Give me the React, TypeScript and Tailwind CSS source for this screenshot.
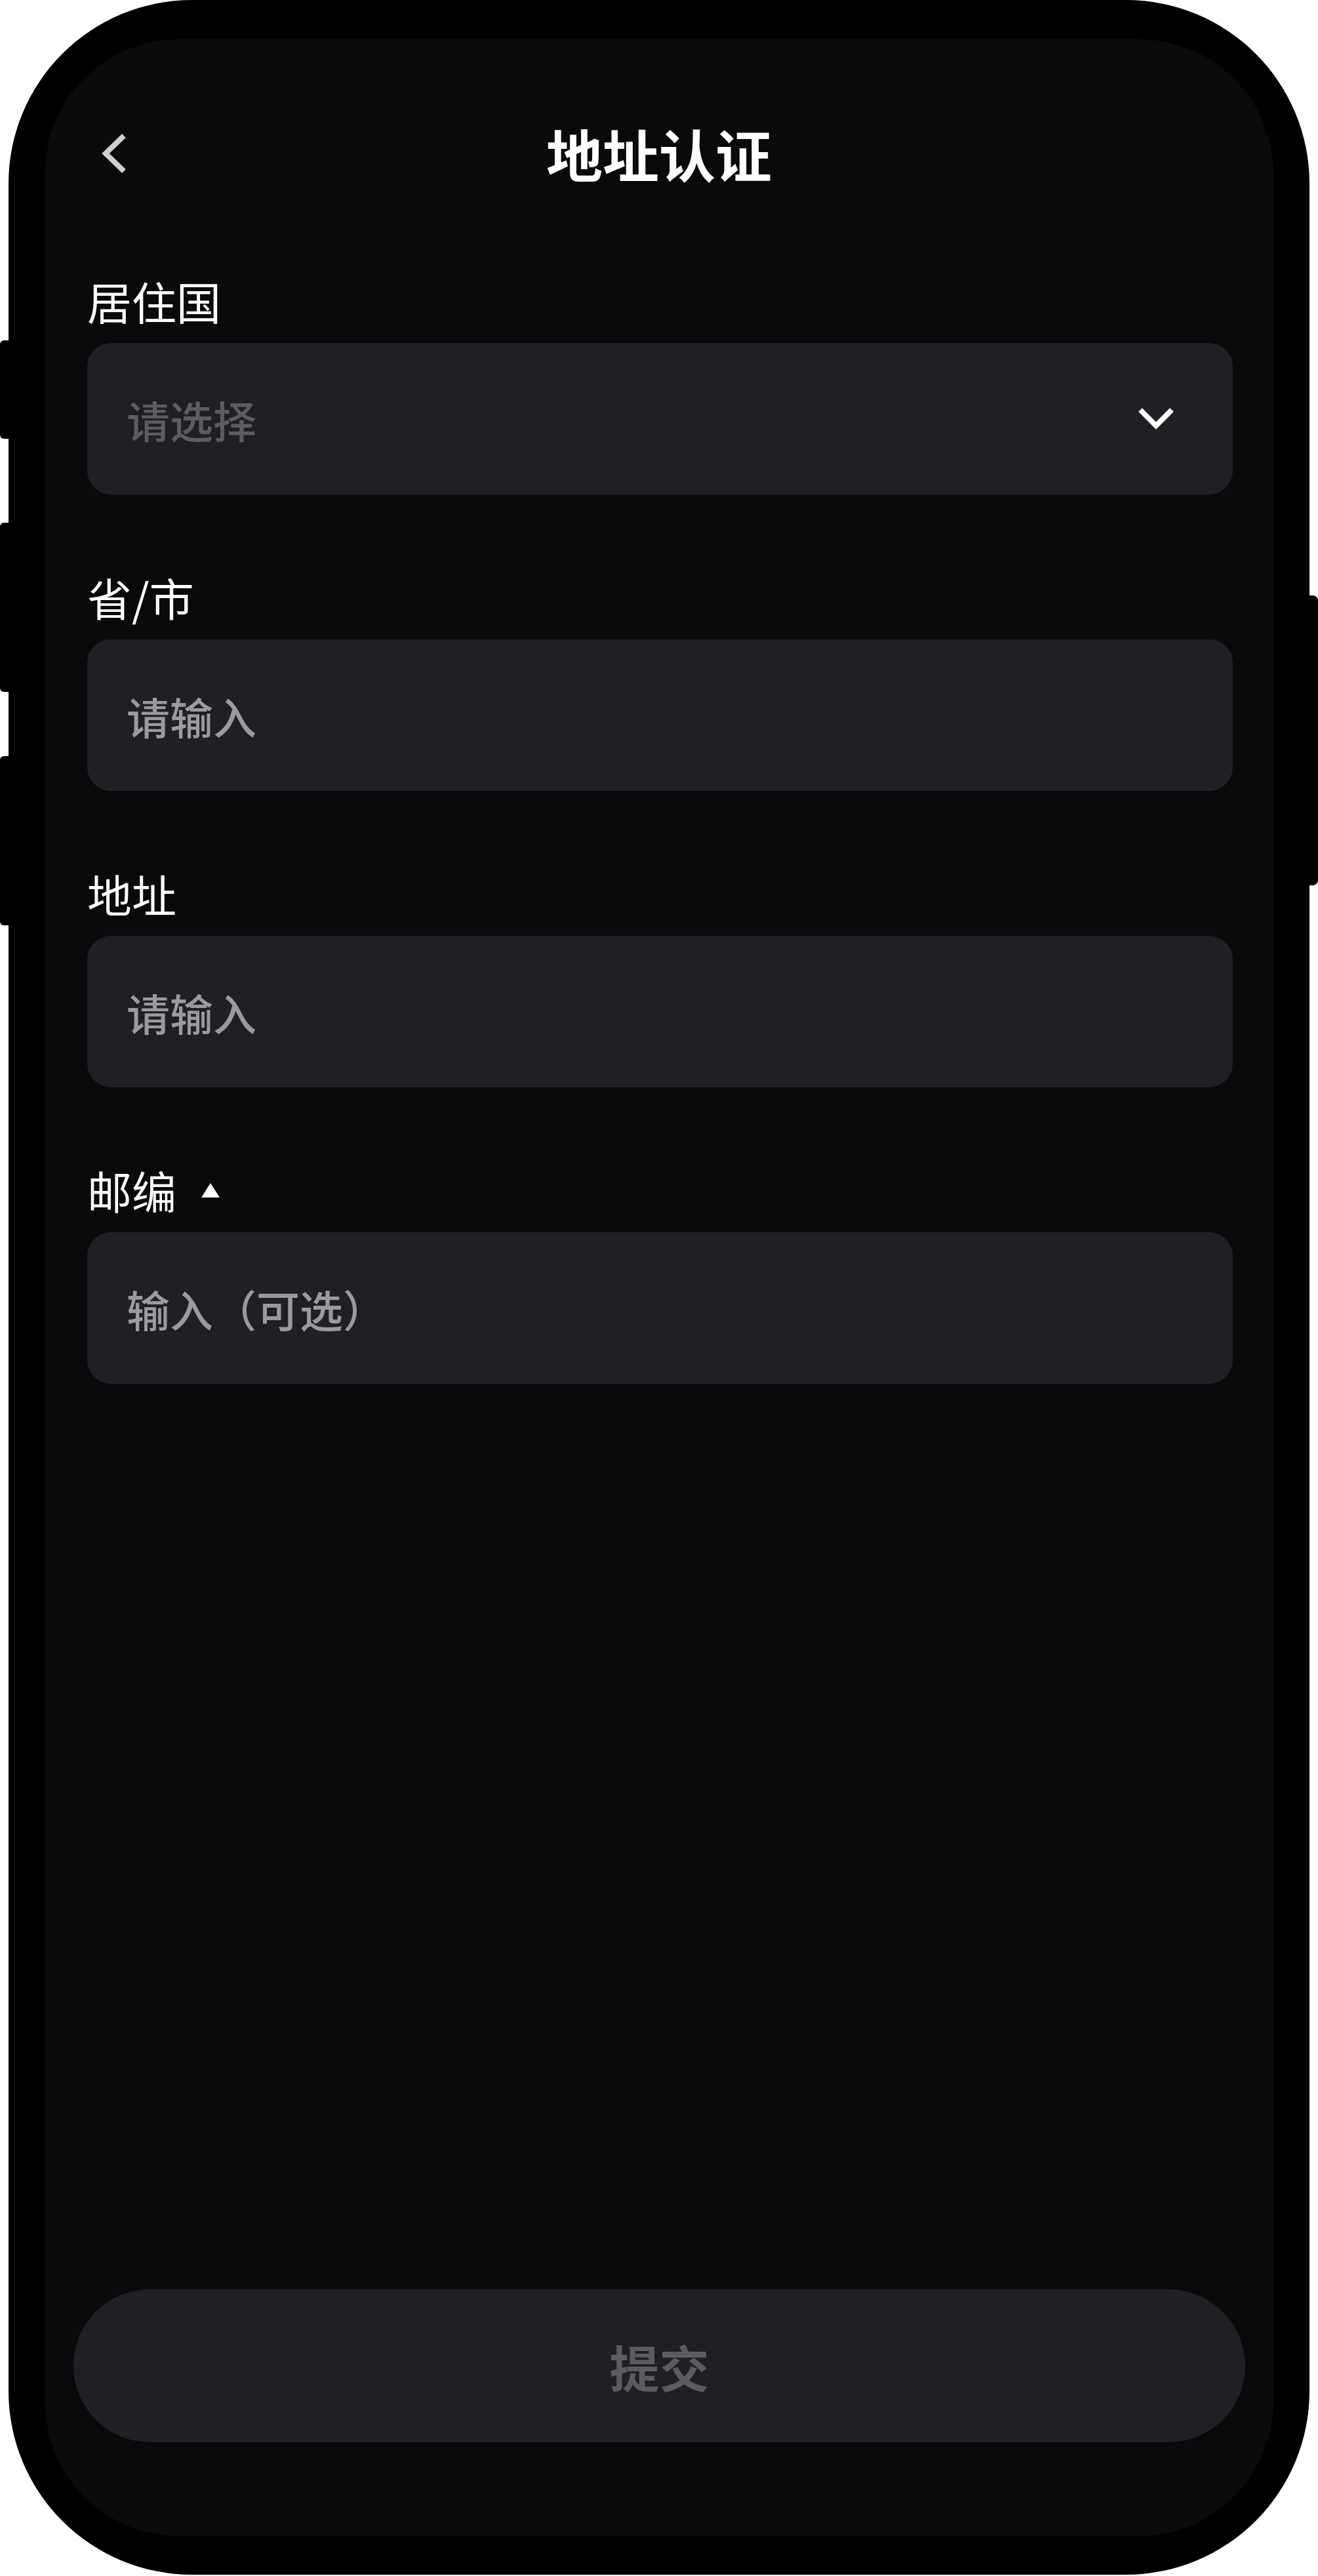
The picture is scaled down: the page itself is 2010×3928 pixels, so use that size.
import { useState } from 'react'

const fields = [
  { label: '省/市', placeholder: '请输入' },
  { label: '地址', placeholder: '请输入' },
]

function BackIcon() {
  return (
    <svg width="40" height="62" viewBox="0 0 40 62" fill="none">
      <path d="M34 4 L6 31 L34 58" stroke="#cfcfcf" strokeWidth="8" strokeLinejoin="miter" />
    </svg>
  )
}

function ChevronDownIcon() {
  return (
    <svg width="54" height="40" viewBox="0 0 54 40" fill="none">
      <path d="M3 6 L27 30 L51 6" stroke="#ffffff" strokeWidth="8" />
    </svg>
  )
}

function Label({ children }: { children: React.ReactNode }) {
  return <div className="flex items-center text-[68px] leading-none text-white h-[68px]">{children}</div>
}

export default function App() {
  const [values, setValues] = useState<Record<string, string>>({})

  return (
    <div className="w-[2010px] h-[3928px] bg-white font-['Noto_Sans_CJK_SC','Noto_Sans',sans-serif]">
      <div className="relative ml-[13px] w-[1984px] h-[3926px] rounded-[280px] bg-black pt-[60px] pb-[59px] pl-[55px] pr-[55px]">
        {/* hardware buttons */}
        <div className="absolute left-[-13px] top-[519px] w-[16px] h-[150px] rounded-l-[6px] bg-black" />
        <div className="absolute left-[-13px] top-[797px] w-[16px] h-[258px] rounded-l-[6px] bg-black" />
        <div className="absolute left-[-13px] top-[1153px] w-[16px] h-[258px] rounded-l-[6px] bg-black" />
        <div className="absolute right-[-13px] top-[908px] w-[16px] h-[442px] rounded-r-[8px] bg-black" />

        <div className="flex h-full flex-col rounded-[205px] bg-[#090a0a]">
          {/* header */}
          <div className="mt-[114px] grid h-[120px] grid-cols-[1fr_auto_1fr] items-center">
            <div className="pl-[87px]">
              <BackIcon />
            </div>
            <h1 className="text-[86px] font-bold leading-none text-white">地址认证</h1>
            <div />
          </div>

          {/* form */}
          <div className="mt-[131px] flex flex-col gap-[123px] pl-[65px] pr-[62px]">
            <div className="flex flex-col gap-[30px]">
              <Label>居住国</Label>
              <button className="flex h-[231px] items-center justify-between rounded-[36px] bg-[#1f2024] pl-[60px] pr-[90px]">
                <span className="text-[66px] font-medium leading-none text-[#5c5d61]">请选择</span>
                <ChevronDownIcon />
              </button>
            </div>

            {fields.map((f) => (
              <div key={f.label} className="flex flex-col gap-[30px]">
                <Label>{f.label}</Label>
                <input
                  value={values[f.label] ?? ''}
                  onChange={(e) => setValues({ ...values, [f.label]: e.target.value })}
                  placeholder={f.placeholder}
                  className="h-[231px] rounded-[36px] bg-[#1f2024] pl-[60px] text-[66px] font-medium text-white outline-none placeholder:text-[#9a9b9f]"
                />
              </div>
            ))}

            <div className="flex flex-col gap-[30px]">
              <Label>
                邮编
                <svg className="ml-[38px]" width="28" height="22" viewBox="0 0 28 22">
                  <path d="M14 0 L28 22 L0 22 Z" fill="#ffffff" />
                </svg>
              </Label>
              <input
                value={values.zip ?? ''}
                onChange={(e) => setValues({ ...values, zip: e.target.value })}
                placeholder="输入（可选）"
                className="h-[231px] rounded-[36px] bg-[#1f2024] pl-[60px] text-[66px] font-medium text-white outline-none placeholder:text-[#9a9b9f]"
              />
            </div>
          </div>

          <div className="flex-1" />

          <div className="mb-[143px] pl-[44px] pr-[43px]">
            <button className="flex h-[233px] w-full items-center justify-center rounded-full bg-[#1f2024] text-[76px] font-bold leading-none text-[#5b5c60]">
              提交
            </button>
          </div>
        </div>
      </div>
    </div>
  )
}
